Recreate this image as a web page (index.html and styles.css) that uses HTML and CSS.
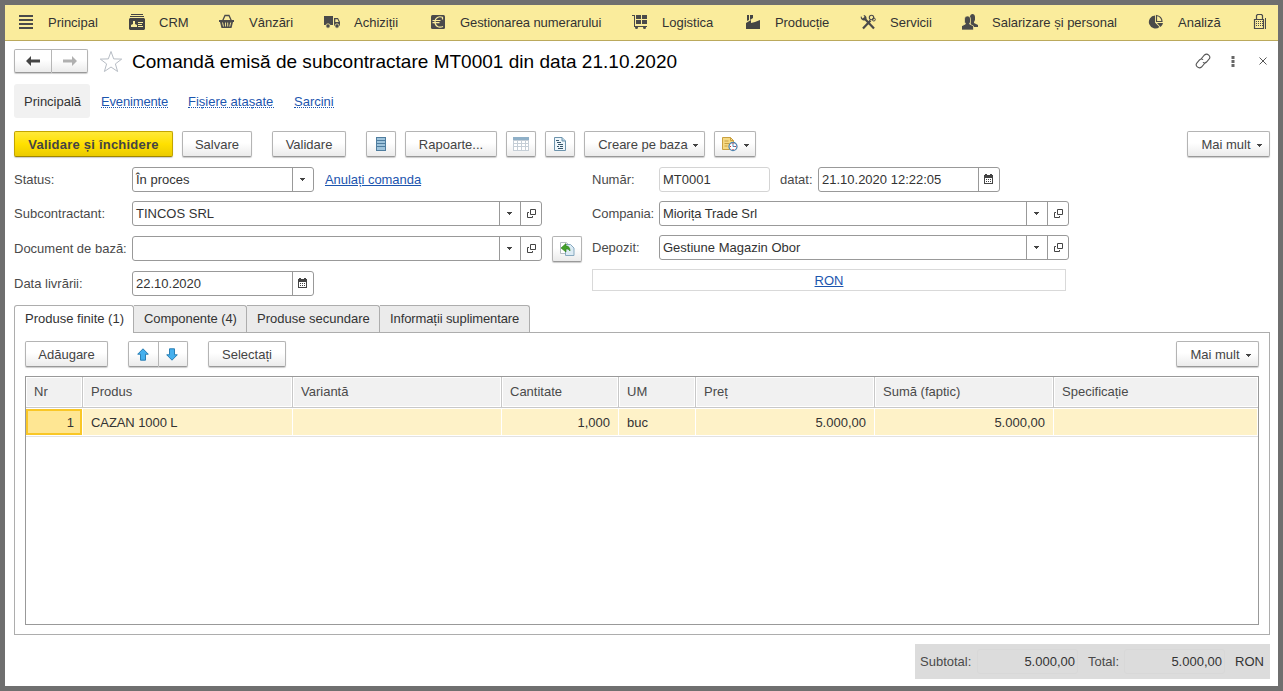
FILE: index.html
```html
<!DOCTYPE html>
<html lang="ro">
<head>
  <meta charset="utf-8">
  <title>Comandă emisă de subcontractare</title>
  <link rel="stylesheet" href="styles.css">
</head>
<body>
  <svg class="defs" width="0" height="0">
    <symbol id="caret" viewBox="0 0 5 3"><path d="M0 0h5v1h-1v1h-1v1h-1v-1h-1v-1h-1z" fill="#444"/></symbol>
    <symbol id="open" viewBox="0 0 9 9"><path d="M3.500 .5h5v5h-5zM2 3.500h-1.500v5h5v-1.500" fill="none" stroke="#444"/></symbol>
    <symbol id="calendar" viewBox="0 0 9 10">
      <path d="M0 1h1v-1h2v1h3v-1h2v1h1v9h-9z" fill="#444"/>
      <path d="M1 4h7v5h-7z" fill="#fff"/>
      <path d="M2 5h1v1h-1zM4 5h1v1h-1zM6 5h1v1h-1zM2 7h1v1h-1zM4 7h1v1h-1zM6 7h1v1h-1z" fill="#444"/>
    </symbol>
  </svg>

  <div class="window">
    <nav class="sections">
      <a class="section">
        <svg width="16" height="16"><path d="M1 1h14v2H1zM1 5h14v2H1zM1 9h14v2H1zM1 13h14v2H1z" fill="#4a4a4a"/></svg>
        <span>Principal</span>
      </a>
      <a class="section">
        <svg width="16" height="16"><path d="M2 0h12v1H2zM1 2h14v1H1zM1 4h14l1 1v10l-1 1H1l-1-1V5z" fill="#444"/><path d="M4 7h2v3l2 1v2H2v-2l2-1zM9 8h5v1H9zM9 10h4v1H9zM9 12h5v1H9z" fill="#faec9c"/></svg>
        <span>CRM</span>
      </a>
      <a class="section">
        <svg width="16" height="16"><path d="M3.500 7L6 1.500h4L12.500 7" fill="none" stroke="#4a4a4a" stroke-width="1.300"/><path d="M0 6h15v2H14l-1.500 6h-10L1 8H0z" fill="#4a4a4a"/><path d="M3.500 8.500l1 4M6.500 8.500v4M8.700 8.500v4M11.700 8.500l-1 4" stroke="#faec9c" stroke-width=".9"/></svg>
        <span>Vânzări</span>
      </a>
      <a class="section">
        <svg width="16" height="16"><path d="M0 2h9v9H0zM10 4h4l2 4v4h-6z" fill="#4a4a4a"/><path d="M11.300 5.300h2.200l1.300 2.700h-3.500z" fill="#faec9c"/><circle cx="4" cy="12" r="2.200" fill="#4a4a4a" stroke="#faec9c" stroke-width=".8"/><circle cx="13" cy="12" r="2.200" fill="#4a4a4a" stroke="#faec9c" stroke-width=".8"/></svg>
        <span>Achiziții</span>
      </a>
      <a class="section">
        <svg width="16" height="16"><rect x="1" y="1" width="14" height="14" rx="1.500" fill="#4a4a4a"/><path d="M12.500 5.500V3.300C9 1.800 5 3.500 5 8s4 6.200 8 4.500M2.500 6.500h8M2.500 8.700h7" fill="none" stroke="#faec9c" stroke-width="1.200"/></svg>
        <span class="tight">Gestionarea numerarului</span>
      </a>
      <a class="section">
        <svg width="16" height="16"><path d="M0 1h3v11h12v1H2V2H0zM4 1h5v4H4zM10 1h5v4h-5zM4 6h5v4H4zM10 6h5v4h-5z" fill="#4a4a4a"/><circle cx="4.500" cy="13.500" r="1.500" fill="#4a4a4a"/><circle cx="12.500" cy="13.500" r="1.500" fill="#4a4a4a"/></svg>
        <span>Logistica</span>
      </a>
      <a class="section">
        <svg width="16" height="16"><path d="M1 15V9l5-3v3l4-1 5-2v9zM2 1h2v5l-2 1zM5 1h3v3L5 6z" fill="#444"/></svg>
        <span class="tight">Producție</span>
      </a>
      <a class="section">
        <svg width="16" height="16"><path d="M3 14.500L10.500 6.500M5 5l9 9.500" stroke="#4a4a4a" stroke-width="2.200"/><path d="M1 2l1.500 2.500L4.500 3 3.500 1c2 0 3.500 2 3 4l-2 1.500C2 6.500 0 4.500 1 2z" fill="#4a4a4a"/><circle cx="11.500" cy="3.500" r="2.200" fill="none" stroke="#4a4a4a" stroke-width="1.100"/><circle cx="13.800" cy="5.500" r="1.500" fill="none" stroke="#4a4a4a"/></svg>
        <span>Servicii</span>
      </a>
      <a class="section">
        <svg width="16" height="16"><path d="M8 3c0-4 5-4 5 0v3l-1 2v1l4 2v2H9z" fill="#4a4a4a"/><path d="M2.500 5c0-4 6-4 6 0v3l-1 2 4 2v4H-.5v-4l4-2-1-2z" fill="#4a4a4a" stroke="#faec9c" stroke-width=".7"/></svg>
        <span>Salarizare și personal</span>
      </a>
      <a class="section">
        <svg width="16" height="16"><path d="M7 1.500A6.500 6.500 0 1 0 11.500 13L7 8.500z" fill="#4a4a4a"/><path d="M8.500 1.500A6 6 0 0 1 14 7.500H8.500z" fill="none" stroke="#4a4a4a" stroke-width="1.200"/><path d="M9 9h6a6 6 0 0 1-2.500 4z" fill="#4a4a4a"/></svg>
        <span>Analiză</span>
      </a>
      <a class="section">
        <svg width="16" height="16"><path d="M3.500 5.500v-4l1-1h4l1 1v4M1.500 5.500h9v9h-9z" fill="none" stroke="#4a4a4a" stroke-width="1.200"/><path d="M3 7.500h7M3 9.500h7M3 11.500h7" stroke="#4a4a4a" stroke-dasharray="1 1"/><path d="M12 4h1v11h-1z" fill="#4a4a4a"/></svg>
      </a>
    </nav>

    <header class="title-row">
      <div class="btn-pair">
        <button class="btn"><svg width="14" height="10"><path d="M0 5l5-5v3.500h9v3H5V10z" fill="#444"/></svg></button>
        <button class="btn"><svg width="14" height="10"><path d="M14 5L9 0v3.500H0v3h9V10z" fill="#b0b0b0"/></svg></button>
      </div>
      <svg class="star" width="24" height="23"><path d="M12 1.500l2.700 7.400 8 .2-6.300 4.800 2.200 7.600L12 17l-6.600 4.500 2.200-7.600L1.300 9.100l8-.2z" fill="#fff" stroke="#b6bcc4"/></svg>
      <h1>Comandă emisă de subcontractare MT0001 din data 21.10.2020</h1>
      <div class="window-tools">
        <svg width="16" height="16"><path d="M6 6l3.500-4c2.700-2.500 7 1.200 4.500 4.200L11.500 9c-1 1-2.500 1.200-3.600.4M10 10l-3.500 4c-2.700 2.500-7-1.200-4.500-4.200L4.500 7c1-1 2.500-1.200 3.600-.4" fill="none" stroke="#555" stroke-width="1.100"/></svg>
        <svg width="4" height="13"><path d="M.5 1h3v3h-3zM.5 5h3v3h-3zM.5 9h3v3h-3z" fill="#666"/></svg>
        <svg class="close" width="8" height="8"><path d="M.5.5l7 7M7.500.5l-7 7" stroke="#555"/></svg>
      </div>
    </header>

    <div class="page-links">
      <span class="current">Principală</span>
      <a class="l1">Evenimente</a>
      <a class="l2">Fișiere atașate</a>
      <a class="l3">Sarcini</a>
    </div>

    <div class="toolbar">
      <button class="btn primary">Validare și închidere</button>
      <button class="btn save">Salvare</button>
      <button class="btn post">Validare</button>
      <button class="btn icon first"><svg width="10" height="14"><path d="M0 0h10v14H0z" fill="#4f7d9f"/><path d="M1 1h8v2H1zM1 4h8v2H1zM1 7h8v2H1zM1 10h8v3H1z" fill="#9fc4dc"/></svg></button>
      <button class="btn reports">Rapoarte...</button>
      <button class="btn icon"><svg width="16" height="14"><path d="M0 0h16v14H0z" fill="#c5ced6"/><path d="M0 0h16v3H0z" fill="#8fb0c8"/><path d="M1 4h3v2H1zM5 4h3v2H5zM9 4h3v2H9zM13 4h2v2h-2zM1 7h3v2H1zM5 7h3v2H5zM9 7h3v2H9zM13 7h2v2h-2zM1 10h3v3H1zM5 10h3v3H5zM9 10h3v3H9zM13 10h2v3h-2z" fill="#fff"/></svg></button>
      <button class="btn icon"><svg width="12" height="14"><path d="M.5.5h7.500l3.500 3.500v9.500H.5z" fill="#eef6fb" stroke="#6d93ac"/><path d="M8 .5V4h3.500" fill="#b9d4e4" stroke="#6d93ac"/><path d="M2 3h3v1H2zM3 5h4v1H3zM4 7h5v1H4zM3 9h2v1H3zM6 9h3v1H6zM4 11h5v1H4z" fill="#36566c"/></svg></button>
      <button class="btn create">Creare pe baza<svg class="caret"><use href="#caret"/></svg></button>
      <button class="btn note"><svg width="16" height="16"><path d="M.5 1.500h8l3 3v9H.5z" fill="#f5d983" stroke="#c9a040"/><path d="M8.500 1.500v3h3M2.500 5h4M2.500 7.500h5M2.500 10h3" fill="none" stroke="#c9a040"/><circle cx="11" cy="10.500" r="4" fill="#fff" stroke="#5085b0" stroke-width="1.300"/><path d="M11 8v2.500h2" fill="none" stroke="#5085b0"/><path d="M10.500 7h1v1h-1zM10.500 13h1v1h-1zM8 10h1v1H8zM13 10h1v1h-1z" fill="#d33"/></svg><svg class="caret"><use href="#caret"/></svg></button>
      <button class="btn more">Mai mult<svg class="caret"><use href="#caret"/></svg></button>
    </div>

    <div class="form">
      <div class="form-left">
        <div class="row">
          <label>Status:</label>
          <div class="field short"><span>În proces</span><i><svg class="caret"><use href="#caret"/></svg></i></div>
          <a class="link cancel">Anulați comanda</a>
        </div>
        <div class="row">
          <label>Subcontractant:</label>
          <div class="field long"><span>TINCOS SRL</span><i><svg class="caret"><use href="#caret"/></svg></i><i><svg class="open"><use href="#open"/></svg></i></div>
        </div>
        <div class="row">
          <label>Document de bază:</label>
          <div class="field long"><span></span><i><svg class="caret"><use href="#caret"/></svg></i><i><svg class="open"><use href="#open"/></svg></i></div>
          <button class="btn icon fill"><svg width="15" height="14"><path d="M.5.500h6l2 2v9h-8z" fill="#fff" stroke="#b5bcc2"/><path d="M5.500 2.500h5l3.500 3.500v7.500H5.500z" fill="#dcebf4" stroke="#86a8bf"/><path d="M1 6l5-4.500V4c3 0 4 2 4 5-1-1.500-2-2-4-2v3z" fill="#43a02a" stroke="#2c7d18" stroke-width=".6"/></svg></button>
        </div>
        <div class="row">
          <label>Data livrării:</label>
          <div class="field short"><span>22.10.2020</span><i><svg class="calendar"><use href="#calendar"/></svg></i></div>
        </div>
      </div>
      <div class="form-right">
        <div class="row">
          <label>Număr:</label>
          <div class="field number"><span>MT0001</span></div>
          <label class="dated">datat:</label>
          <div class="field short"><span>21.10.2020 12:22:05</span><i><svg class="calendar"><use href="#calendar"/></svg></i></div>
        </div>
        <div class="row">
          <label class="tight">Compania:</label>
          <div class="field long"><span class="tight">Miorița Trade Srl</span><i><svg class="caret"><use href="#caret"/></svg></i><i><svg class="open"><use href="#open"/></svg></i></div>
        </div>
        <div class="row">
          <label>Depozit:</label>
          <div class="field long"><span>Gestiune Magazin Obor</span><i><svg class="caret"><use href="#caret"/></svg></i><i><svg class="open"><use href="#open"/></svg></i></div>
        </div>
        <div class="currency"><a class="link">RON</a></div>
      </div>
    </div>

    <div class="tabs">
      <div class="tab active">Produse finite (1)</div>
      <div class="tab t2">Componente (4)</div>
      <div class="tab t3">Produse secundare</div>
      <div class="tab t4">Informații suplimentare</div>
    </div>
    <div class="panel">
      <div class="panel-bar">
        <button class="btn add">Adăugare</button>
        <div class="btn-pair moves">
          <button class="btn"><svg width="12" height="13"><path d="M6 .8l5.300 5.400H8.500v6h-5v-6H.7z" fill="#45b0ee" stroke="#2b7fb4"/></svg></button>
          <button class="btn"><svg width="12" height="13"><path d="M6 12.200L.7 6.800h2.800v-6h5v6h2.800z" fill="#45b0ee" stroke="#2b7fb4"/></svg></button>
        </div>
        <button class="btn pick">Selectați</button>
        <button class="btn more">Mai mult<svg class="caret"><use href="#caret"/></svg></button>
      </div>
      <div class="grid">
        <div class="grid-row head">
          <div>Nr</div>
          <div>Produs</div>
          <div>Variantă</div>
          <div>Cantitate</div>
          <div>UM</div>
          <div>Preț</div>
          <div>Sumă (faptic)</div>
          <div>Specificație</div>
        </div>
        <div class="grid-row item">
          <div class="num selected">1</div>
          <div class="tight">CAZAN 1000 L</div>
          <div></div>
          <div class="num">1,000</div>
          <div>buc</div>
          <div class="num">5.000,00</div>
          <div class="num">5.000,00</div>
          <div></div>
        </div>
      </div>
    </div>

    <footer class="totals">
      <label>Subtotal:</label>
      <div class="total">5.000,00</div>
      <label class="second">Total:</label>
      <div class="total">5.000,00</div>
      <span>RON</span>
    </footer>
  </div>
</body>
</html>
```

FILE: styles.css
```css
* {
  box-sizing: border-box;
}
body {
  margin: 0;
  font-family: "Liberation Sans", Arial, sans-serif;
  font-size: 13px;
  line-height: 15px;
  color: #333;
}
svg {
  display: block;
  flex: none;
}
.defs {
  position: absolute;
}
.window {
  height: 691px;
  border: 5px solid #6f6f6f;
  background: #fff;
  overflow: hidden;
}
.tight {
  letter-spacing: -0.08px;
}

/* section bar */
.sections {
  display: grid;
  grid-template-columns: 111px 90px 105px 106px 202px 113px 115px 102px 186px 105px 20px;
  height: 36px;
  padding-left: 13px;
  background: #faec9c;
  border-bottom: 1px solid #bba95c;
}
.section {
  display: flex;
  align-items: center;
  gap: 14px;
  white-space: nowrap;
}
.section svg {
  margin-bottom: 1px;
}

/* buttons */
.btn {
  display: flex;
  align-items: center;
  justify-content: center;
  height: 26px;
  padding: 0;
  border: 1px solid #b4b4b4;
  border-bottom-color: #999;
  border-radius: 2px;
  background: linear-gradient(#fff, #fff 45%, #ebebeb);
  box-shadow: 0 1px 1px #ccc;
  font: inherit;
  color: #444;
  white-space: nowrap;
}
.btn .caret {
  margin: 2px 0 0 6px;
}
.btn-pair {
  display: flex;
}
.btn-pair .btn:first-child {
  border-radius: 2px 0 0 2px;
}
.btn-pair .btn:last-child {
  border-left: 0;
  border-radius: 0 2px 2px 0;
}
.caret {
  width: 5px;
  height: 3px;
}
.open {
  width: 9px;
  height: 9px;
}
.calendar {
  width: 9px;
  height: 10px;
}

/* title */
.title-row {
  display: flex;
  align-items: center;
  height: 43px;
  padding: 0 11px 3px 9px;
}
.title-row .btn {
  width: 38px;
  height: 24px;
}
.title-row .btn:last-child {
  width: 36px;
}
.star {
  margin: 0 9px 0 11px;
}
h1 {
  margin: 0;
  padding-top: 2px;
  font-size: 19px;
  line-height: 24px;
  font-weight: normal;
  color: #000;
  letter-spacing: 0.02px;
  white-space: nowrap;
}
.window-tools {
  display: flex;
  align-items: center;
  gap: 20px;
  margin-left: auto;
}
.close {
  margin-left: 4px;
}
.page-links {
  display: flex;
  align-items: center;
  height: 34px;
  padding-left: 9px;
}
.page-links .current {
  width: 76px;
  height: 34px;
  line-height: 35px;
  padding-left: 10px;
  border-radius: 3px;
  background: #f1f1f1;
}
.page-links a {
  height: 14px;
  margin-left: 20px;
  line-height: 15px;
  color: #1c55ae;
  border-bottom: 1px dotted #1c55ae;
}
.page-links .l1 {
  width: 67px;
  margin-left: 11px;
  letter-spacing: -0.15px;
}
.page-links .l2 {
  width: 86px;
}
.page-links .l3 {
  width: 40px;
}

/* command bar */
.toolbar {
  display: flex;
  gap: 9px;
  margin-top: 13px;
  padding: 0 8px 0 9px;
}
.primary {
  width: 159px;
  border-color: #c3a500;
  border-bottom-color: #a08700;
  background: linear-gradient(#ffe93a, #ffe000 50%, #ebcb00);
  font-weight: bold;
  letter-spacing: 0.22px;
}
.save {
  width: 70px;
}
.post {
  width: 74px;
  margin-left: 11px;
}
.icon {
  width: 30px;
}
.icon.first {
  margin-left: 11px;
}
.reports {
  width: 92px;
}
.create {
  width: 121px;
  padding-left: 7px;
}
.create .caret {
  margin-left: 5px;
}
.note {
  width: 42px;
}
.more {
  width: 83px;
  margin-left: auto;
  padding-left: 6px;
}

/* form */
.form {
  display: flex;
  padding: 10px 0 0 9px;
}
.form-left {
  width: 578px;
}
.row {
  display: flex;
  align-items: center;
  height: 25px;
  margin-bottom: 9px;
}
.form-left .row + .row {
  margin-bottom: 10px;
}
.form-left .row:last-child {
  margin-bottom: 9px;
}
.row label {
  width: 118px;
  color: #4a4a4a;
  white-space: nowrap;
}
.form-right label {
  width: 67px;
}
.form-right .dated {
  width: 38px;
  margin-left: 10px;
}
.field {
  display: flex;
  height: 25px;
  border: 1px solid #999;
  border-radius: 3px;
  background: #fff;
}
.field span {
  flex: 1;
  padding-left: 3px;
  line-height: 23px;
  white-space: nowrap;
}
.field i {
  display: flex;
  align-items: center;
  justify-content: center;
  width: 21px;
  padding-right: 1px;
  border-left: 1px solid #999;
}
.field .calendar {
  margin-bottom: 1px;
}
.field .open {
  margin-left: 2px;
}
.short {
  width: 182px;
}
.long {
  width: 410px;
}
.number {
  width: 111px;
  border-color: #d4d4d4;
}
.link {
  color: #1c55ae;
  text-decoration: underline;
}
.cancel {
  margin-left: 11px;
  letter-spacing: -0.05px;
}
.fill {
  margin-left: 10px;
}
.currency {
  width: 474px;
  height: 22px;
  border: 1px solid #d9d9d9;
  line-height: 21px;
  text-align: center;
}

/* tabs */
.tabs {
  display: flex;
  padding-left: 9px;
}
.tab {
  height: 27px;
  padding-left: 10px;
  line-height: 26px;
  border: 1px solid #adadad;
  border-width: 1px 1px 0 0;
  border-radius: 0 3px 0 0;
  background: #ebebeb;
  white-space: nowrap;
}
.active {
  width: 120px;
  height: 28px;
  border-left-width: 1px;
  border-radius: 3px 3px 0 0;
  margin-bottom: -1px;
  background: #fff;
  z-index: 1;
}
.t2 {
  width: 113px;
  letter-spacing: -0.08px;
}
.t3 {
  width: 133px;
}
.t4 {
  width: 150px;
  letter-spacing: -0.1px;
}
.panel {
  height: 303px;
  margin: 0 8px 0 9px;
  padding: 8px 10px 9px;
  border: 1px solid #adadad;
}
.panel-bar {
  display: flex;
}
.add {
  width: 83px;
}
.moves {
  margin: 0 20px;
}
.moves .btn {
  width: 31px;
  padding-right: 2px;
}
.moves .btn:last-child {
  width: 29px;
}
.pick {
  width: 78px;
}
.grid {
  height: 249px;
  margin-top: 9px;
  border: 1px solid #999;
}
.grid-row {
  display: grid;
  grid-template-columns: 57px 210px 209px 117px 77px 179px 179px 1fr;
}
.grid-row div {
  padding-left: 8px;
  white-space: nowrap;
}
.head {
  height: 31px;
  border-bottom: 1px solid #c8c8c8;
}
.head div {
  border-right: 1px solid #c8c8c8;
  box-shadow: inset 0 0 0 1px #fff;
  background: #f1f1f1;
  line-height: 29px;
  color: #4a4a4a;
}
.head div:last-child {
  border-right: 0;
}
.item {
  height: 29px;
  padding: 1px 0;
  border-bottom: 1px solid #e2e2e2;
}
.item div {
  height: 26px;
  border-right: 1px solid #fff;
  background: #fef2c8;
  line-height: 27px;
}
.item .num {
  padding-right: 8px;
  text-align: right;
}
.item .selected {
  margin-right: 1px;
  padding-right: 6px;
  border: 2px solid #f9c727;
  background: #fee693;
  line-height: 23px;
}

/* totals */
.totals {
  display: flex;
  align-items: center;
  width: 355px;
  height: 35px;
  margin: 9px 8px 0 auto;
  padding-left: 5px;
  background: #dcdcdc;
}
.totals label {
  width: 57px;
  color: #4a4a4a;
}
.totals .second {
  width: 36px;
  margin-left: 10px;
}
.total {
  width: 101px;
  height: 25px;
  padding-right: 2px;
  border: 1px solid #d8d8d8;
  border-radius: 3px;
  line-height: 23px;
  text-align: right;
}
.totals span {
  margin-left: 10px;
}
```
